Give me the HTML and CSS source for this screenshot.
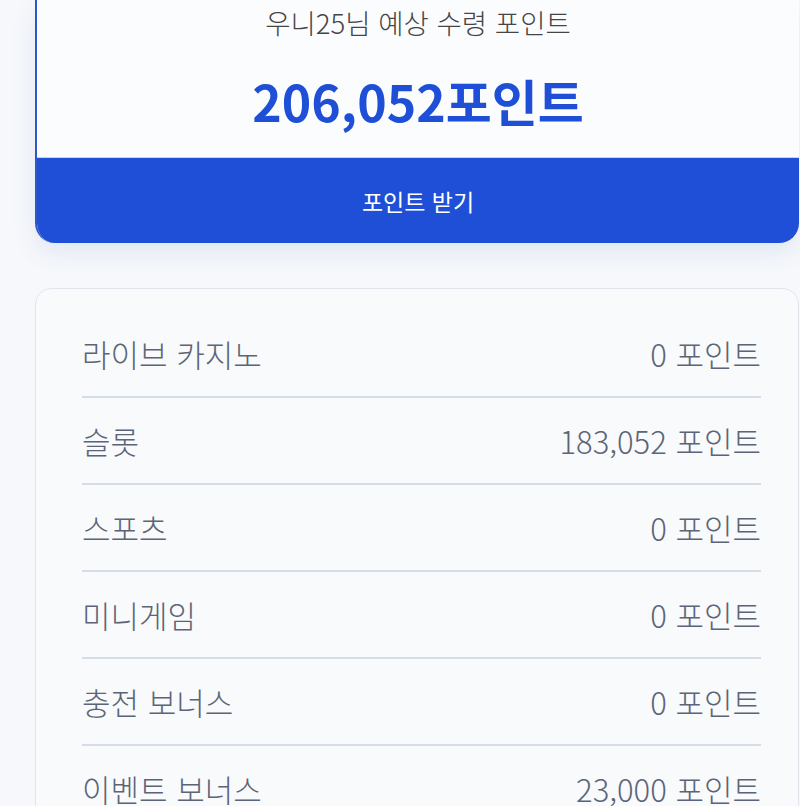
FILE: index.html
```html
<!DOCTYPE html>
<html lang="ko">
<head>
<meta charset="utf-8">
<link rel="stylesheet" href="styles.css">
</head>
<body>
<main class="page">
  <section class="summary">
    <div class="summary-body">
      <p class="summary-title">우니25님 예상 수령 포인트</p>
      <p class="summary-amount">206,052포인트</p>
    </div>
    <button class="claim-btn">포인트 받기</button>
  </section>

  <section class="breakdown">
    <div class="row"><span class="label">라이브 카지노</span><span class="value">0 포인트</span></div>
    <div class="row"><span class="label">슬롯</span><span class="value">183,052 포인트</span></div>
    <div class="row"><span class="label">스포츠</span><span class="value">0 포인트</span></div>
    <div class="row"><span class="label">미니게임</span><span class="value">0 포인트</span></div>
    <div class="row"><span class="label">충전 보너스</span><span class="value">0 포인트</span></div>
    <div class="row"><span class="label">이벤트 보너스</span><span class="value">23,000 포인트</span></div>
  </section>
</main>
</body>
</html>
```

FILE: styles.css
```css
html, body {
  margin: 0;
  padding: 0;
  background: #f6f8fb;
  font-family: "Noto Sans CJK KR", "Noto Sans", sans-serif;
  overflow: hidden;
}

.page {
  padding: 0 1px 0 35px;
  width: 800px;
  box-sizing: border-box;
}

.summary {
  background: #fbfcfe;
  border-left: 2px solid #2f56c4;
  border-radius: 0 0 20px 20px;
  box-shadow: 0 10px 24px rgba(60, 90, 170, 0.10);
  overflow: hidden;
}

.summary-body {
  padding: 4px 0 27px;
  text-align: center;
  border-bottom: 1px solid #c9d4ee;
}

.summary-title {
  margin: 0;
  font-size: 27.5px;
  line-height: 36px;
  font-weight: 300;
  color: #454545;
}

.summary-amount {
  margin: 30px 0 0;
  font-size: 50px;
  line-height: 60px;
  font-weight: 700;
  color: #1f4fd6;
}

.claim-btn {
  display: block;
  width: 100%;
  height: 85px;
  border: none;
  background: #1f4fd6;
  color: #ffffff;
  font-family: inherit;
  font-size: 23px;
  font-weight: 400;
  padding: 0;
}

.breakdown {
  margin-top: 45px;
  background: #f8fafc;
  border: 1px solid #e2e6ec;
  border-radius: 16px;
  padding: 22px 37px 0 46px;
}

.row {
  display: flex;
  justify-content: space-between;
  align-items: center;
  height: 85px;
  border-bottom: 2px solid #d5dde8;
  font-size: 31px;
  font-weight: 300;
  color: #5c6577;
}
```
